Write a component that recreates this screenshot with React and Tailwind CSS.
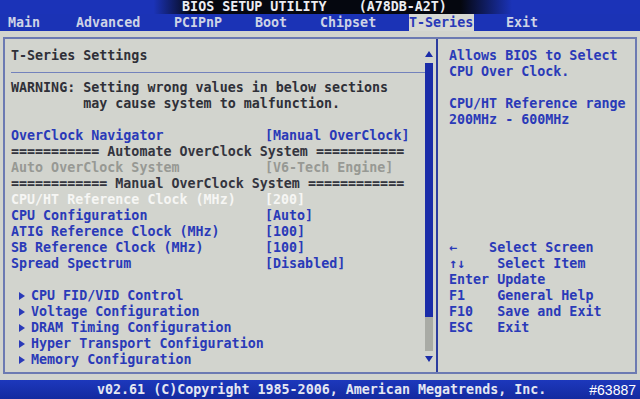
import React from 'react';

const fonte = { fontFamily: '"DejaVu Sans Mono", "Liberation Mono", monospace' };

const abas = [
  { nome: 'Main', w: 'w-[68px]' },
  { nome: 'Advanced', w: 'w-[98px]' },
  { nome: 'PCIPnP', w: 'w-[81px]' },
  { nome: 'Boot', w: 'w-[65px]' },
  { nome: 'Chipset', w: 'w-[89px]' },
  { nome: 'T-Series', w: 'w-[97px]', ativo: true },
  { nome: 'Exit', w: 'w-[60px]' },
];

const itens = [
  { tipo: 'item', label: 'OverClock Navigator', valor: '[Manual OverClock]', cor: 'text-[#2a3ab8]' },
  { tipo: 'sep', label: '=========== Automate OverClock System ===========' },
  { tipo: 'item', label: 'Auto OverClock System', valor: '[V6-Tech Engine]', cor: 'text-[#979994]' },
  { tipo: 'sep', label: '============ Manual OverClock System ============' },
  { tipo: 'item', label: 'CPU/HT Reference Clock (MHz)', valor: '[200]', cor: 'text-[#f6f6f4]' },
  { tipo: 'item', label: 'CPU Configuration', valor: '[Auto]', cor: 'text-[#2a3ab8]' },
  { tipo: 'item', label: 'ATIG Reference Clock (MHz)', valor: '[100]', cor: 'text-[#2a3ab8]' },
  { tipo: 'item', label: 'SB Reference Clock (MHz)', valor: '[100]', cor: 'text-[#2a3ab8]' },
  { tipo: 'item', label: 'Spread Spectrum', valor: '[Disabled]', cor: 'text-[#2a3ab8]' },
];

const submenus = [
  'CPU FID/VID Control',
  'Voltage Configuration',
  'DRAM Timing Configuration',
  'Hyper Transport Configuration',
  'Memory Configuration',
];

const teclas = [
  '←    Select Screen',
  '↑↓    Select Item',
  'Enter Update',
  'F1    General Help',
  'F10   Save and Exit',
  'ESC   Exit',
];

function Seta({ baixo }) {
  return (
    <svg width="8" height="6" viewBox="0 0 8 6" className="block">
      {baixo ? <polygon points="0,0 8,0 4,6" fill="#1a2ca8" /> : <polygon points="4,0 8,6 0,6" fill="#1a2ca8" />}
    </svg>
  );
}

export default function App() {
  return (
    <div
      className="w-[640px] h-[399px] flex flex-col overflow-hidden text-[13.33px] leading-4 font-bold bg-[#d2d4ce]"
      style={fonte}
    >
      {/* titulo */}
      <div className="h-[14px] flex items-center justify-center bg-[linear-gradient(to_right,#1b33b8_24%,#05070f_30%,#05070f_72%,#1b33b8_80%)]">
        <span className="whitespace-pre text-[#ecedf2] leading-[14px] pr-[11px]">BIOS SETUP UTILITY    (A78DB-A2T)</span>
      </div>

      {/* abas */}
      <div className="h-[17px] flex items-stretch bg-[#1b33b6] pl-[8px]">
        {abas.map((a) => (
          <div key={a.nome} className={`${a.w} flex items-stretch`}>
            <span
              className={
                a.ativo
                  ? 'bg-[#d6d8d3] text-[#2a3ab8] flex items-center pr-[1px]'
                  : 'text-[#ced3e6] flex items-center'
              }
            >
              {a.nome}
            </span>
          </div>
        ))}
      </div>

      {/* corpo */}
      <div className="h-[349px] px-[3px] pt-[6px] pb-[6px]">
        <div className="h-full border-2 border-[#6c7ab2] flex">
          {/* painel esquerdo */}
          <div className="w-[420px] pl-[6px] pt-[9px] text-[#2a3ab8]">
            <div className="h-4 text-[#2f3038]">T-Series Settings</div>
            <div className="h-4 flex items-center">
              <div className="w-full h-px bg-[#7382bc]" />
            </div>
            <div className="h-4 text-[#2f3038] whitespace-pre">WARNING: Setting wrong values in below sections</div>
            <div className="h-4 text-[#2f3038] whitespace-pre">         may cause system to malfunction.</div>
            <div className="h-4" />
            {itens.map((it, i) =>
              it.tipo === 'sep' ? (
                <div key={i} className="h-4 text-[#34353e] whitespace-pre">{it.label}</div>
              ) : (
                <div key={i} className={`h-4 flex whitespace-pre ${it.cor}`}>
                  <span className="w-[254px]">{it.label}</span>
                  <span>{it.valor}</span>
                </div>
              )
            )}
            <div className="h-4" />
            {submenus.map((s) => (
              <div key={s} className="h-4 flex items-center">
                <span className="w-[20px] flex justify-center pl-[2px]">
                  <svg width="6" height="8" viewBox="0 0 6 8">
                    <polygon points="0,0 6,4 0,8" fill="#2a3ab8" />
                  </svg>
                </span>
                <span>{s}</span>
              </div>
            ))}
          </div>

          {/* barra de rolagem */}
          <div className="w-[8px] flex flex-col items-center pt-[12px]">
            <Seta />
            <div className="mt-[6px] w-[8px] h-[254px] bg-[#1a2ca8]" />
            <div className="w-[8px] h-[34px] bg-[#a9aba5]" />
            <div className="mt-[5px]">
              <Seta baixo />
            </div>
          </div>

          <div className="ml-[3px] w-[2px] bg-[#2c3c9e]" />

          {/* painel direito */}
          <div className="flex-1 pl-[11px] pt-[9px] text-[#2a3ab8] whitespace-pre">
            <div className="h-4">Allows BIOS to Select</div>
            <div className="h-4">CPU Over Clock.</div>
            <div className="h-4" />
            <div className="h-4">CPU/HT Reference range</div>
            <div className="h-4">200MHz - 600MHz</div>
            <div className="h-[112px]" />
            {teclas.map((t) => (
              <div key={t} className="h-4">{t}</div>
            ))}
          </div>
        </div>
      </div>

      {/* rodape */}
      <div className="h-[19px] flex items-center bg-[linear-gradient(to_bottom,#1d38bc,#132aa0)] relative">
        <span className="pl-[97px] text-[#e4e7f2] whitespace-pre">v02.61 (C)Copyright 1985-2006, American Megatrends, Inc.</span>
        <span
          className="absolute right-[4px] top-[2px] text-[14px] leading-4 font-normal text-white"
          style={{ fontFamily: '"Liberation Sans", Arial, sans-serif' }}
        >
          #63887
        </span>
      </div>
    </div>
  );
}
